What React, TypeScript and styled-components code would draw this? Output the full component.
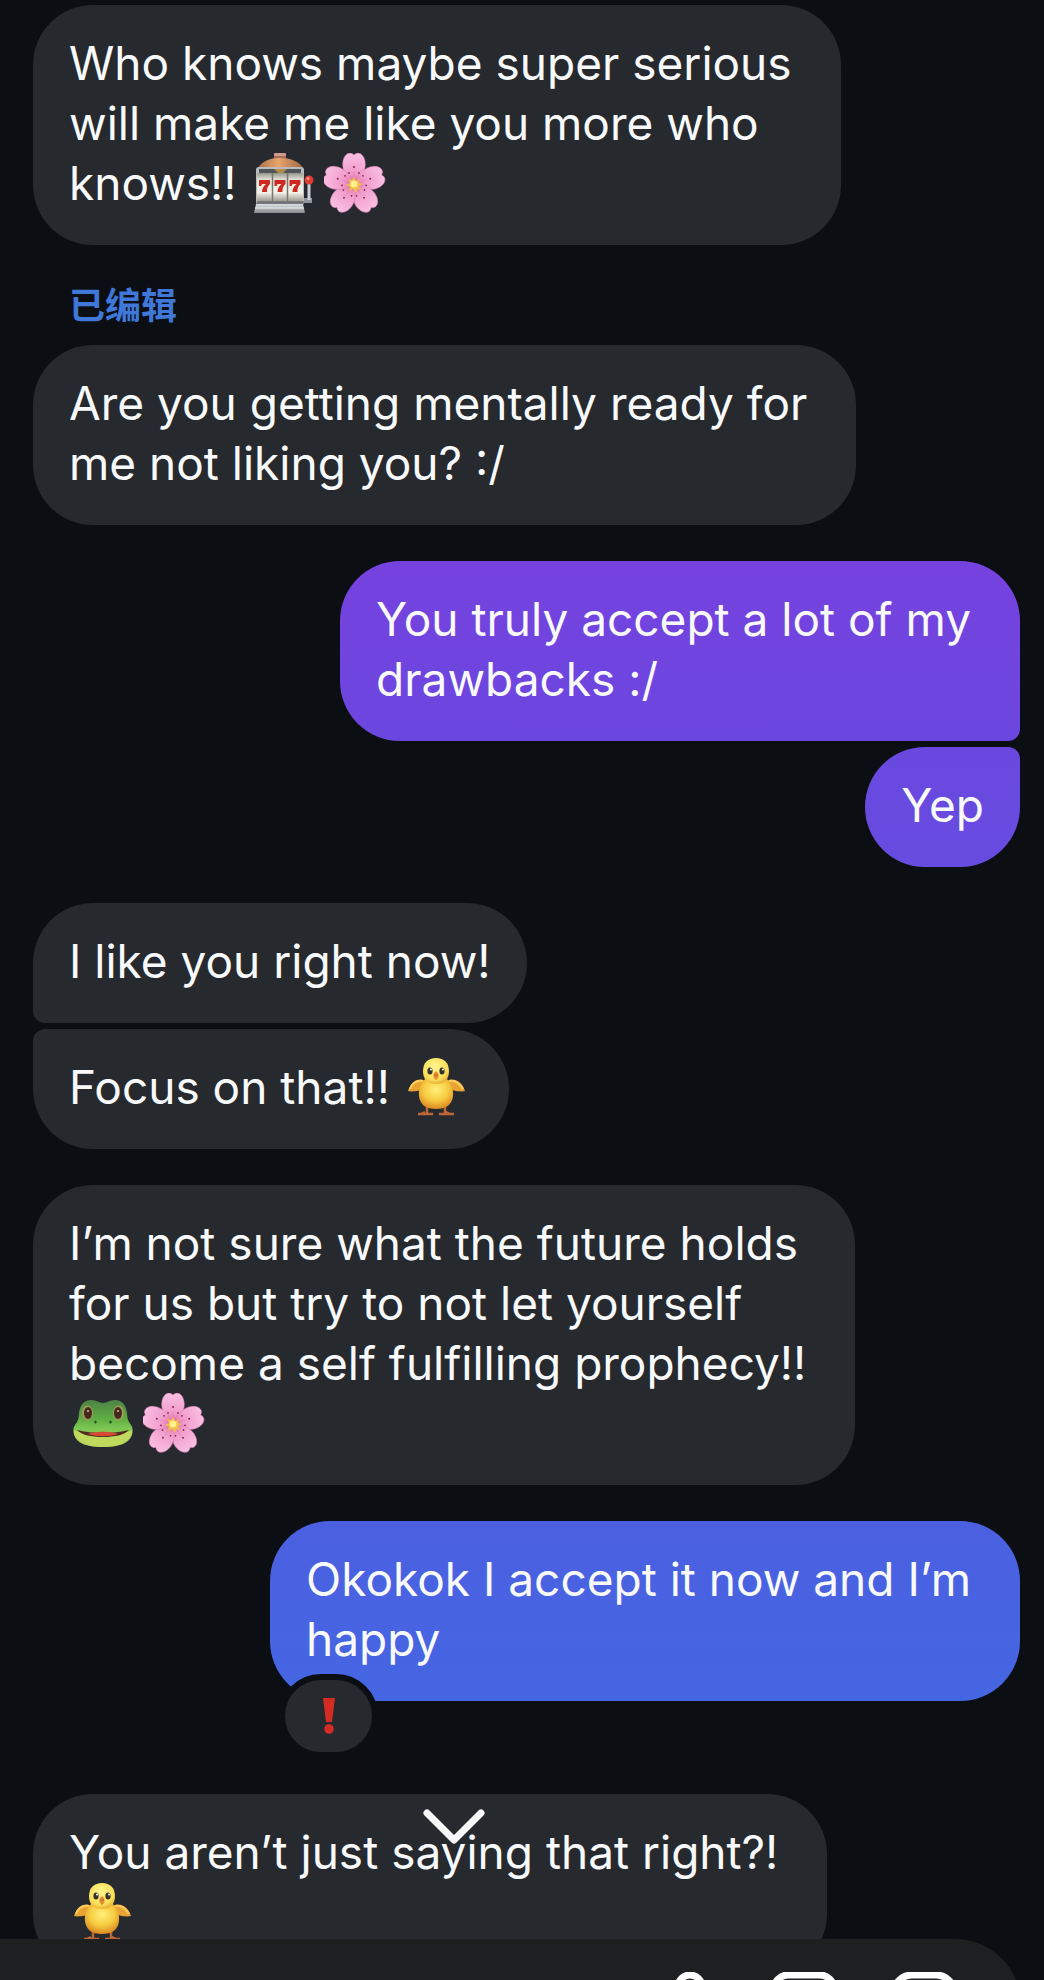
import React from 'react';
import styled, { createGlobalStyle, css } from 'styled-components';

const GlobalStyle = createGlobalStyle`
  *, *::before, *::after { box-sizing: border-box; }
  body {
    margin: 0;
    background: #0b0e12;
    color: #f8f9fb;
    font-family: Inter, "Noto Sans CJK SC", sans-serif;
  }
`;

const Screen = styled.main`
  position: relative;
  height: 100vh;
  overflow: hidden;
`;

const Thread = styled.section`
  display: flex;
  flex-direction: column;
  gap: 36px;
  padding: 5px 24px 6px 33px;
`;

const Group = styled.div<{ $own?: boolean; $reacted?: boolean }>`
  display: flex;
  flex-direction: column;
  align-items: ${(p) => (p.$own ? 'flex-end' : 'flex-start')};
  gap: 6px;
  margin-bottom: ${(p) => (p.$reacted ? '57px' : '0')};
`;

const EditedGroup = styled.div`
  display: flex;
  flex-direction: column;
  align-items: flex-start;
  gap: 20px;
`;

const EditedLabel = styled.span`
  padding-left: 36px;
  color: #3f78d8;
  font-family: "Noto Sans CJK SC", sans-serif;
  font-size: 36px;
  font-weight: 600;
  line-height: 44px;
`;

type Join = 'none' | 'top' | 'bottom';

const Bubble = styled.div<{ $fill?: string; $join?: Join }>`
  position: relative;
  width: fit-content;
  padding: 28px 36px 32px;
  border-radius: 60px;
  background: ${(p) => p.$fill ?? '#26292e'};
  font-size: 46px;
  line-height: 60px;
  white-space: pre;
  ${(p) =>
    p.$join === 'bottom' &&
    (p.$fill
      ? css`border-bottom-right-radius: 12px;`
      : css`border-bottom-left-radius: 12px;`)}
  ${(p) =>
    p.$join === 'top' &&
    (p.$fill
      ? css`border-top-right-radius: 12px;`
      : css`border-top-left-radius: 12px;`)}
`;

const Line = styled.div`
  height: 60px;
`;

const EmojiArt = styled.svg`
  width: 62px;
  height: 60px;
  margin: 0 4px;
  vertical-align: top;
`;

const Reaction = styled.button`
  position: absolute;
  left: 9px;
  bottom: -57px;
  display: flex;
  align-items: center;
  justify-content: center;
  width: 99px;
  height: 84px;
  padding: 0;
  border: 6px solid #0b0e12;
  border-radius: 42px;
  background: #26292e;
  svg { width: 14px; height: 38px; }
`;

const ScrollDown = styled.button`
  position: absolute;
  left: 0;
  right: 136px;
  bottom: 134px;
  display: flex;
  width: 64px;
  margin: 0 auto;
  padding: 0;
  border: 0;
  background: none;
  svg { width: 64px; height: 38px; }
`;

const ComposerDock = styled.footer`
  position: absolute;
  left: 0;
  right: 0;
  bottom: 0;
  height: 41px;
  padding-right: 23px;
  overflow: hidden;
`;

const Composer = styled.div`
  display: flex;
  justify-content: flex-end;
  gap: 52px;
  height: 132px;
  padding: 33px 64px;
  border-radius: 0 66px 66px 0;
  background: #1e1f20;
`;

const ToolButton = styled.button`
  width: 66px;
  height: 66px;
  padding: 0;
  border: 0;
  background: none;
  svg { display: block; width: 66px; height: 66px; }
`;

const Slot = () => (
  <EmojiArt viewBox="0 0 62 60" role="img" aria-label="Slot machine">
    <defs>
      <linearGradient id="slotDome" x1="0" x2="1">
        <stop offset="0" stopColor="#a8714c" />
        <stop offset=".45" stopColor="#e9a56a" />
        <stop offset="1" stopColor="#9c6747" />
      </linearGradient>
      <linearGradient id="slotReel" x1="0" y1="0" x2="0" y2="1">
        <stop offset="0" stopColor="#97968a" />
        <stop offset=".25" stopColor="#e6e5d9" />
        <stop offset=".7" stopColor="#f3f2e8" />
        <stop offset="1" stopColor="#9f9d90" />
      </linearGradient>
      <linearGradient id="slotBase" x1="0" y1="0" x2="0" y2="1">
        <stop offset="0" stopColor="#dcdedf" />
        <stop offset="1" stopColor="#85898d" />
      </linearGradient>
    </defs>
    <rect x="20" y="0" width="12" height="8" rx="2" fill="#a96f60" />
    <rect x="20" y="0" width="12" height="3" rx="1" fill="#d09a88" />
    <path d="M4 15C8 8 16 5 26 5s19 3 23 10Z" fill="url(#slotDome)" />
    <rect x="2" y="14" width="48" height="38" rx="3" fill="#b9bcbb" />
    <rect x="5" y="16" width="42" height="4" fill="#51545a" />
    <path d="M20 16h13l-4 4h-5Z" fill="#b28a4c" />
    <rect x="3" y="20" width="46" height="28" rx="2" fill="url(#slotReel)" />
    <path d="M18.5 20v28M33.5 20v28" stroke="#77786f" strokeWidth="1.5" />
    {[5, 20.5, 35.5].map((x) => (
      <path
        key={x}
        d={`M${x} 27h11v4c-3 3-3 5-3 8h-5c0-4 2-6 4-8h-4l-1 2h-2Z`}
        fill="#cf2722"
      />
    ))}
    <path d="M3 48h47l-1 4H2Z" fill="#73777a" />
    <path d="M2 51h47l2 9H0Z" fill="url(#slotBase)" />
    <path d="M1 55h49" stroke="#f1f2f2" />
    <path d="M50 45h8v5h-8Z" fill="#90969b" />
    <path d="M55 29v18" stroke="#cbd1d6" strokeWidth="3" />
    <circle cx="55" cy="27" r="4.500" fill="#df3b31" />
    <circle cx="54" cy="25.500" r="1.500" fill="#ff9389" />
  </EmojiArt>
);

const Blossom = () => (
  <EmojiArt viewBox="0 0 62 60" role="img" aria-label="Cherry blossom">
    <defs>
      <radialGradient id="petal" gradientUnits="userSpaceOnUse" cx="30" cy="31" r="31">
        <stop offset="0" stopColor="#e0609f" />
        <stop offset=".35" stopColor="#f09bca" />
        <stop offset="1" stopColor="#fabfe3" />
      </radialGradient>
    </defs>
    {[0, 72, 144, 216, 288].map((angle) => (
      <g key={angle} transform={`rotate(${angle} 30 31)`}>
        <path
          d="M30 31C24 27 17 17 19 8c1-5 4-8 7-8 2 0 3 1 4 2 1-1 2-2 4-2 3 0 6 3 7 8 2 9-5 19-11 23Z"
          fill="url(#petal)"
          stroke="#d77bb0"
          strokeWidth=".5"
        />
        <path d="M30 26v-8" stroke="#e27db0" strokeWidth=".6" />
        <circle cx="30" cy="14" r="1" fill="#8b2451" />
        <circle cx="25" cy="20" r=".9" fill="#8b2451" />
        <circle cx="35" cy="20" r=".9" fill="#8b2451" />
      </g>
    ))}
    <path
      d="m30 24 2 4 4-2-1 4 4 1-4 2 2 4-4-1-1 4-3-4-4 2 1-4-4-2 4-2-2-4 4 1Z"
      fill="#efc04a"
    />
    <circle cx="30" cy="31" r="3.500" fill="#fff08a" />
  </EmojiArt>
);

const Chick = () => (
  <EmojiArt viewBox="0 0 62 60" role="img" aria-label="Chick">
    <defs>
      <radialGradient id="chickHead" cx=".45" cy=".35" r=".7">
        <stop offset="0" stopColor="#fff58e" />
        <stop offset=".7" stopColor="#f9df59" />
        <stop offset="1" stopColor="#e6a42e" />
      </radialGradient>
      <radialGradient id="chickBody" cx=".5" cy=".35" r=".65">
        <stop offset="0" stopColor="#fff07a" />
        <stop offset=".55" stopColor="#f7cd42" />
        <stop offset="1" stopColor="#db8a21" />
      </radialGradient>
    </defs>
    <path
      d="M20 50v6M38 50v6M11 57h15M18 55l-4 2M32 57h15M39 55l4 2"
      stroke="#bd6739"
      strokeWidth="2.500"
    />
    <path d="M19 24C11 20 4 24 1 34c4 1 13 0 17-3Z" fill="#e9a332" />
    <path d="M39 24c8-4 16 0 19 10-4 1-13 0-17-3Z" fill="#e9a332" />
    <path d="M16 24C9 23 5 27 3 32M42 24c7-1 11 3 14 8" stroke="#f8cd61" strokeWidth="2" fill="none" />
    <path
      d="M18 22c-3 4-7 9-6 17 1 9 7 13 17 13s16-4 17-13c1-8-3-13-6-17Z"
      fill="url(#chickBody)"
    />
    <path
      d="M29 1c-8 0-13 5-13 13 0 9 5 13 13 13s13-4 13-13C42 6 37 1 29 1Z"
      fill="url(#chickHead)"
    />
    <ellipse cx="23" cy="14" rx="2.600" ry="3.600" fill="#383326" />
    <ellipse cx="35" cy="14" rx="2.600" ry="3.600" fill="#383326" />
    <circle cx="24" cy="12.500" r="1" fill="#ffffff" />
    <circle cx="36" cy="12.500" r="1" fill="#ffffff" />
    <path d="M29 14c4 3 3 7 0 9-3-2-4-6 0-9Z" fill="#e58d35" />
    <path d="M27 18h4" stroke="#a95d26" strokeWidth=".8" />
  </EmojiArt>
);

const Frog = () => (
  <EmojiArt viewBox="0 0 62 60" role="img" aria-label="Frog">
    <defs>
      <linearGradient id="frogSkin" x1="0" y1="0" x2="0" y2="1">
        <stop offset="0" stopColor="#4d8145" />
        <stop offset=".4" stopColor="#5fae42" />
        <stop offset=".6" stopColor="#7cc653" />
        <stop offset="1" stopColor="#a1c549" />
      </linearGradient>
    </defs>
    <path
      d="M30 10c-4 0-6-3-12-3C11 7 7 12 6 20c0 5-1 8-4 12-2 3-2 6-1 10 3 9 14 12 29 12s26-3 29-12c1-4 1-7-1-10-3-4-4-7-4-12-1-8-5-13-12-13-6 0-8 3-12 3Z"
      fill="url(#frogSkin)"
    />
    <path d="M1 37c14 7 44 7 58 0 1 11-12 17-29 17S0 48 1 37Z" fill="#bfd85e" />
    <path d="M4 37c14 4 38 4 52 0-5 5-14 7-26 7S9 42 4 37Z" fill="#542a20" />
    <path d="M15 41c7-3 23-3 30 0-10 3-20 3-30 0Z" fill="#d44b35" />
    <ellipse cx="14.500" cy="20" rx="5.500" ry="7.500" fill="#a09b58" />
    <ellipse cx="45.500" cy="20" rx="5.500" ry="7.500" fill="#a09b58" />
    <ellipse cx="15" cy="20" rx="4" ry="6" fill="#44291d" />
    <ellipse cx="45" cy="20" rx="4" ry="6" fill="#44291d" />
    <circle cx="15" cy="18" r="1" fill="#d8c3a6" />
    <circle cx="45" cy="18" r="1" fill="#d8c3a6" />
    <ellipse cx="22.500" cy="29" rx="1.200" ry="1.600" fill="#234e24" />
    <ellipse cx="37.500" cy="29" rx="1.200" ry="1.600" fill="#234e24" />
  </EmojiArt>
);

const purple = 'linear-gradient(#7642df, #6b47df)';
const violet = 'linear-gradient(#6a48df, #674ce0)';
const blue = 'linear-gradient(#4b60e1, #4566e2)';

export default function App() {
  return (
    <Screen>
      <GlobalStyle />
      <Thread aria-label="Messages">
        <Group>
          <Bubble>
            <Line>{'Who knows maybe super serious '}</Line>
            <Line>{'will make me like you more who '}</Line>
            <Line>{'knows!! '}<Slot /><Blossom /></Line>
          </Bubble>
        </Group>
        <EditedGroup>
          <EditedLabel lang="zh">已编辑</EditedLabel>
          <Bubble>
            <Line>{'Are you getting mentally ready for '}</Line>
            <Line>me not liking you? :/</Line>
          </Bubble>
        </EditedGroup>
        <Group $own>
          <Bubble $fill={purple} $join="bottom">
            <Line>{'You truly accept a lot of my '}</Line>
            <Line>drawbacks :/</Line>
          </Bubble>
          <Bubble $fill={violet} $join="top">
            <Line>Yep</Line>
          </Bubble>
        </Group>
        <Group>
          <Bubble $join="bottom">
            <Line>I like you right now!</Line>
          </Bubble>
          <Bubble $join="top">
            <Line>{'Focus on that!! '}<Chick /></Line>
          </Bubble>
        </Group>
        <Group>
          <Bubble>
            <Line>{'I’m not sure what the future holds '}</Line>
            <Line>{'for us but try to not let yourself '}</Line>
            <Line>{'become a self fulfilling prophecy!! '}</Line>
            <Line><Frog /><Blossom /></Line>
          </Bubble>
        </Group>
        <Group $own $reacted>
          <Bubble $fill={blue}>
            <Line>{'Okokok I accept it now and I’m '}</Line>
            <Line>happy</Line>
            <Reaction aria-label="Exclamation reaction">
              <svg viewBox="0 0 14 38">
                <path d="M1 1h12l-3 24H4Z" fill="#d42c22" />
                <circle cx="7" cy="32" r="4.800" fill="#d42c22" />
              </svg>
            </Reaction>
          </Bubble>
        </Group>
        <Group>
          <Bubble>
            <Line>{'You aren’t just saying that right?! '}</Line>
            <Line><Chick /></Line>
          </Bubble>
        </Group>
      </Thread>
      <ScrollDown aria-label="Scroll to latest message">
        <svg viewBox="0 0 64 38" fill="none">
          <path d="M5 5l27 27L59 5" stroke="#f8f8f9" strokeWidth="7" strokeLinecap="round" strokeLinejoin="round" />
        </svg>
      </ScrollDown>
      <ComposerDock>
        <Composer>
          <ToolButton aria-label="Record voice message">
            <svg viewBox="0 0 66 66" fill="none" stroke="#ffffff" strokeWidth="7">
              <rect x="23" y="3" width="24" height="38" rx="12" />
              <path d="M12 30c0 30 46 30 46 0M35 52v12" strokeLinecap="round" />
            </svg>
          </ToolButton>
          <ToolButton aria-label="Send photo">
            <svg viewBox="0 0 66 66" fill="none" stroke="#ffffff" strokeWidth="7">
              <rect x="1" y="3" width="60" height="60" rx="14" />
              <circle cx="22" cy="23" r="5" />
              <path d="M3 52l20-16 16 14 10-8 11 8" />
            </svg>
          </ToolButton>
          <ToolButton aria-label="Send sticker">
            <svg viewBox="0 0 66 66" fill="none" stroke="#ffffff" strokeWidth="7">
              <path d="M21 3h24a18 18 0 0 1 18 18v18L39 63H21A18 18 0 0 1 3 45V21A18 18 0 0 1 21 3Z" />
              <path d="M39 62V53a14 14 0 0 1 14-14h9" />
            </svg>
          </ToolButton>
        </Composer>
      </ComposerDock>
    </Screen>
  );
}
